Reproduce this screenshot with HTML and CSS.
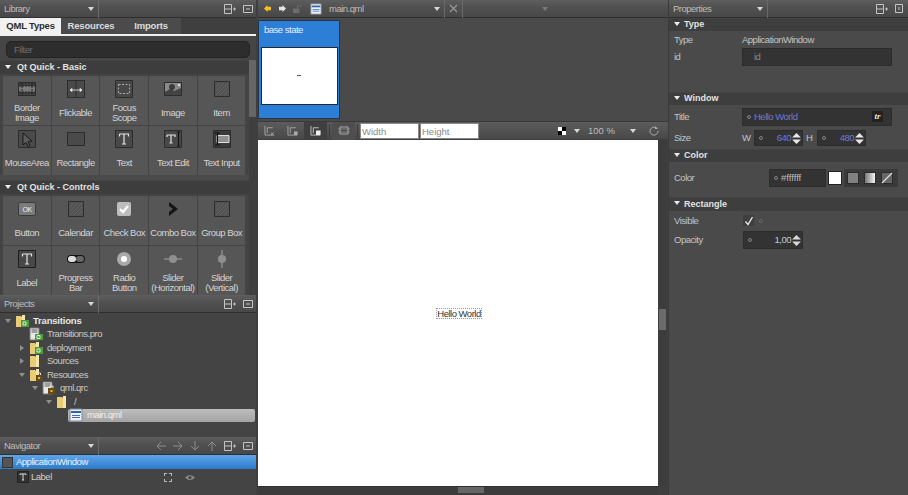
FILE: index.html
```html
<!DOCTYPE html>
<html lang="en">
<head>
<meta charset="utf-8">
<title>Qt Creator Design</title>
<link rel="stylesheet" href="styles.css">
</head>
<body>
<svg class="defs" width="0" height="0">
  <defs>
    <symbol id="split" viewBox="0 0 12 10"><path d="M.5.500h7v9h-7zM.5 5h7M9 5h3M10.500 3.500v3" fill="none" stroke="#c4c4c4"/></symbol>
    <symbol id="close" viewBox="0 0 10 8"><path d="M.5.500h9v7h-9z" fill="none" stroke="#c4c4c4"/><path d="M3 4h4" stroke="#c4c4c4"/></symbol>
    <symbol id="hatch" viewBox="-1 -1 18 18"><path d="M.5.500h15v15H.5z" fill="#525252" stroke="#2e2e2e"/><path d="M2 6l4-4M2 10l8-8M2 14L14 2M6 14l8-8M10 14l4-4" stroke="#646464"/></symbol>
    <symbol id="folder" viewBox="0 0 14 14"><path d="M1 2h5l2 2v9H1z" fill="#e9cd76"/><path d="M7 1h3v12H7z" fill="#f6e6a8"/></symbol>
    <symbol id="qtf" viewBox="0 0 14 14"><path d="M1 2h5l2 2v9H1z" fill="#e9cd76"/><path d="M7 1h3v8H7z" fill="#f6e6a8"/><path d="M6 6h8v7H6z" fill="#4f9a3c"/><path d="M8 8h3v3H8z" fill="none" stroke="#d8f0d0"/></symbol>
    <symbol id="lockf" viewBox="0 0 14 14"><path d="M1 2h5l2 2v9H1z" fill="#e9cd76"/><path d="M7 1h3v8H7z" fill="#f6e6a8"/><path d="M7 7h6v6H7z" fill="#6b4b12"/><path d="M8.500 7V5h3v2" fill="none" stroke="#ddd"/><path d="M9 9h2v2H9z" fill="#e8b93a"/></symbol>
    <symbol id="qml" viewBox="0 0 14 14"><path d="M1 1h12v12H1z" fill="#eef1f6" stroke="#7f8792"/><path d="M2 3h10v2H2z" fill="#2a66b4"/><path d="M3 7h8v1H3zM3 9h8v1H3z" fill="#3d6fb0"/></symbol>
    <symbol id="doc-green" viewBox="0 0 14 14"><path d="M1 1h9v12H1z" fill="#e8e8e8" stroke="#777"/><path d="M2.500 3h6M2.500 5h6" stroke="#555"/><path d="M6 7h8v6H6z" fill="#4f9a3c"/><path d="M8 8.500h3v3H8z" fill="none" stroke="#d8f0d0"/></symbol>
    <symbol id="doc-lock" viewBox="0 0 14 14"><path d="M1 1h9v12H1z" fill="#e8e8e8" stroke="#777"/><path d="M2.500 3h6M2.500 5h6" stroke="#555"/><path d="M6 7h7v6H6z" fill="#6b4b12"/><path d="M8 7V5h3v2" fill="none" stroke="#ddd"/><path d="M8.500 9h2v2h-2z" fill="#e8b93a"/></symbol>
  </defs>
</svg>

<div class="app">
  <aside class="left">
    <section class="library">
      <header class="bar"><span class="bar-title">Library</span><span class="caret"></span><span class="sep"></span><span class="fill"></span>
        <svg class="ico"><use href="#split"/></svg><svg class="ico-c"><use href="#close"/></svg></header>
      <div class="tabs"><span class="tab on">QML Types</span><span class="tab">Resources</span><span class="tab">Imports</span><span class="tabs-rest"></span></div>
      <div class="filter-wrap"><div class="filter">Filter</div></div>
      <div class="lib-body">
        <div class="lib-list">
          <h3 class="sec">Qt Quick - Basic</h3>
          <div class="tiles">
            <div class="tile"><svg class="ti" viewBox="0 0 18 18"><path d="M.5 2.500h17v13H.5z" fill="#3d3d3d" stroke="#2c2c2c"/><path d="M1 6h16v6H1z" fill="#7a7a7a"/><path d="M1 6h16M1 12h16M4 3v12M14 3v12" stroke="#222" stroke-dasharray="2 1"/></svg><span>Border<br>Image</span></div>
            <div class="tile"><svg class="ti" viewBox="0 0 18 18"><path d="M.5.500h17v17H.5z" fill="#4a4a4a" stroke="#2c2c2c"/><path d="M9 1v16" stroke="#2c2c2c"/><path d="M3 10h12M3 10l2-1.500v3zM15 10l-2-1.500v3z" stroke="#e8e8e8" fill="#e8e8e8" stroke-width=".8"/></svg><span>Flickable</span></div>
            <div class="tile"><svg class="ti" viewBox="0 0 18 18"><path d="M.5.500h17v17H.5z" fill="#484848" stroke="#2c2c2c"/><path d="M3.500 4.500h11v9h-11z" fill="none" stroke="#aaa" stroke-dasharray="2 1.500"/></svg><span>Focus<br>Scope</span></div>
            <div class="tile"><svg class="ti" viewBox="0 0 18 18"><path d="M.5 2.500h17v13H.5z" fill="#8a8a8a" stroke="#2c2c2c"/><path d="M1 12l5-3 4 2 7-3v7H1z" fill="#444"/><circle cx="8" cy="7" r="3" fill="#3c3c3c"/><path d="M7.500 8h1v4h-1z" fill="#333"/><path d="M14 4h2v2h-2z" fill="#ddd"/></svg><span>Image</span></div>
            <div class="tile"><svg class="ti"><use href="#hatch"/></svg><span>Item</span></div>
            <div class="tile"><svg class="ti" viewBox="0 0 18 18"><path d="M.5.500h17v17H.5z" fill="#4a4a4a" stroke="#2c2c2c"/><path d="M5 3l9 8-4 .5 2 4-2 1-2-4-3 2.500z" fill="#5c5c5c" stroke="#181818"/></svg><span>MouseArea</span></div>
            <div class="tile"><svg class="ti" viewBox="0 0 18 18"><path d="M.5 2.500h17v13H.5z" fill="#4a4a4a" stroke="#2a2a2a"/></svg><span>Rectangle</span></div>
            <div class="tile"><svg class="ti" viewBox="0 0 18 18"><path d="M.5.500h17v17H.5z" fill="#484848" stroke="#2c2c2c"/><path d="M4.500 4h9v2.500M4.500 4v2.500M9 4v10M7 14h4" fill="none" stroke="#e4e4e4" stroke-width="1.200"/></svg><span>Text</span></div>
            <div class="tile"><svg class="ti" viewBox="0 0 18 18"><path d="M.5.500h17v17H.5z" fill="#484848" stroke="#2c2c2c"/><path d="M3 5h8v2M3 5v2M7 5v8M5.500 13h3" fill="none" stroke="#e4e4e4" stroke-width="1.200"/><path d="M13 2h3M14.500 2v14M13 16h3" stroke="#111" fill="none"/></svg><span>Text Edit</span></div>
            <div class="tile"><svg class="ti" viewBox="0 0 18 18"><path d="M.5.500h17v17H.5z" fill="#3a3a3a" stroke="#2c2c2c"/><path d="M4 5.500h12v7H4z" fill="#8f8f8f" stroke="#ddd"/><path d="M2 3h5M2 15h5M4.500 3v12" stroke="#111" fill="none"/></svg><span>Text Input</span></div>
          </div>
          <h3 class="sec sec-2">Qt Quick - Controls</h3>
          <div class="tiles">
            <div class="tile"><svg class="ti" viewBox="0 0 18 18"><rect x=".5" y="2.500" width="17" height="13" rx="2" fill="#7b7b7b" stroke="#3a3a3a"/><text x="9" y="12" class="oktext" text-anchor="middle">OK</text></svg><span>Button</span></div>
            <div class="tile"><svg class="ti"><use href="#hatch"/></svg><span>Calendar</span></div>
            <div class="tile"><svg class="ti" viewBox="0 0 18 18"><rect x="2" y="2" width="14" height="14" rx="2" fill="#bdbdbd"/><path d="M5 9l3 3 5-6" fill="none" stroke="#fff" stroke-width="2.200"/></svg><span>Check Box</span></div>
            <div class="tile"><svg class="ti" viewBox="0 0 18 18"><path d="M5 2l9 7-9 7v-4l4-3-4-3z" fill="#141414"/></svg><span>Combo Box</span></div>
            <div class="tile"><svg class="ti"><use href="#hatch"/></svg><span>Group Box</span></div>
            <div class="tile"><svg class="ti" viewBox="0 0 18 18"><path d="M.5.500h17v17H.5z" fill="#484848" stroke="#1f1f1f"/><path d="M4.500 4h9v2.500M4.500 4v2.500M9 4v10M7 14h4" fill="none" stroke="#e4e4e4" stroke-width="1.200"/></svg><span>Label</span></div>
            <div class="tile"><svg class="ti" viewBox="0 0 18 18"><rect y="5" width="18" height="8" rx="4" fill="#141414"/><rect x="1" y="6" width="8" height="6" rx="3" fill="#dedede"/><rect x="9" y="6" width="8" height="6" rx="3" fill="#666"/></svg><span>Progress<br>Bar</span></div>
            <div class="tile"><svg class="ti" viewBox="0 0 18 18"><circle cx="9" cy="9" r="7" fill="#aaa"/><circle cx="9" cy="9" r="3" fill="#fff"/></svg><span>Radio<br>Button</span></div>
            <div class="tile"><svg class="ti" viewBox="0 0 18 18"><path d="M0 9h18" stroke="#8a8a8a" stroke-width="1.500"/><circle cx="9" cy="9" r="4" fill="#8f8f8f"/></svg><span>Slider<br>(Horizontal)</span></div>
            <div class="tile"><svg class="ti" viewBox="0 0 18 18"><path d="M9 0v18" stroke="#8a8a8a" stroke-width="1.500"/><circle cx="9" cy="9" r="4" fill="#8f8f8f"/></svg><span>Slider<br>(Vertical)</span></div>
          </div>
        </div>
        <div class="lib-scroll"><span class="lib-thumb"></span></div>
      </div>
    </section>

    <section class="projects">
      <header class="bar"><span class="bar-title">Projects</span><span class="caret"></span><span class="sep"></span><span class="fill"></span>
        <svg class="ico"><use href="#split"/></svg><svg class="ico-c"><use href="#close"/></svg></header>
      <ul class="tree">
        <li class="row d0 bold"><span class="arr open"></span><svg class="fi"><use href="#qtf"/></svg>Transitions</li>
        <li class="row d1"><span class="arr none"></span><svg class="fi"><use href="#doc-green"/></svg>Transitions.pro</li>
        <li class="row d1"><span class="arr shut"></span><svg class="fi"><use href="#qtf"/></svg>deployment</li>
        <li class="row d1"><span class="arr shut"></span><svg class="fi"><use href="#folder"/></svg>Sources</li>
        <li class="row d1"><span class="arr open"></span><svg class="fi"><use href="#lockf"/></svg>Resources</li>
        <li class="row d2"><span class="arr open"></span><svg class="fi"><use href="#doc-lock"/></svg>qml.qrc</li>
        <li class="row d3"><span class="arr open"></span><svg class="fi"><use href="#folder"/></svg>/</li>
        <li class="row d4 sel"><svg class="fi"><use href="#qml"/></svg>main.qml</li>
      </ul>
    </section>

    <section class="navigator">
      <header class="bar"><span class="bar-title">Navigator</span><span class="caret"></span><span class="sep"></span><span class="fill"></span>
        <svg class="nav-ar" viewBox="0 0 10 10"><path d="M10 5H1M5 1L1 5l4 4"/></svg>
        <svg class="nav-ar" viewBox="0 0 10 10"><path d="M0 5h9M5 1l4 4-4 4"/></svg>
        <svg class="nav-ar" viewBox="0 0 10 10"><path d="M5 0v9M1 5l4 4 4-4"/></svg>
        <svg class="nav-ar" viewBox="0 0 10 10"><path d="M5 10V1M1 5l4-4 4 4"/></svg>
        <svg class="ico"><use href="#split"/></svg><svg class="ico-c"><use href="#close"/></svg></header>
      <div class="nav-row active"><span class="swatch"></span>ApplicationWindow</div>
      <div class="nav-row"><svg class="nav-t" viewBox="0 0 12 12"><path d="M.5.500h11v11H.5z" fill="#333" stroke="#222"/><path d="M3 3h6M3 3v1M9 3v1M6 3v6M5 9h2" stroke="#ddd" fill="none"/></svg><span class="nav-name">Label</span>
        <span class="nav-box"></span>
        <svg class="nav-eye" viewBox="0 0 12 8"><path d="M0 4q6-6 12 0-6 6-12 0z" fill="#888"/><circle cx="6" cy="4" r="1.800" fill="#444"/></svg></div>
    </section>
  </aside>

  <main class="center">
    <header class="bar doc-bar">
      <svg class="doc-ar" viewBox="0 0 8 8"><path d="M0 4l4-4v2h4v4H4v2z" fill="#f3c221"/></svg>
      <svg class="doc-ar" viewBox="0 0 8 8"><path d="M8 4L4 0v2H0v4h4v2z" fill="#e4e4e4"/></svg>
      <svg class="doc-lock" viewBox="0 0 10 10"><path d="M0 5h7v5H0z" fill="#6d6d6d"/><path d="M5 5V2h4v2" fill="none" stroke="#6d6d6d"/></svg>
      <svg class="fi doc-fi"><use href="#qml"/></svg>
      <span class="doc-name">main.qml</span><span class="caret caret-doc"></span><span class="sep"></span>
      <svg class="doc-x" viewBox="0 0 9 9"><path d="M1 1l7 7M8 1L1 8" stroke="#9a9a9a" stroke-width="1.100"/></svg><span class="sep"></span>
      <span class="fill"></span><span class="caret caret-dim"></span>
    </header>
    <div class="states">
      <div class="state"><div class="state-name">base state</div><div class="thumb"><i class="thumb-dot"></i></div></div>
    </div>
    <div class="toolbar">
      <span class="tb-btn"><svg viewBox="0 0 12 12"><path d="M.5 1v10h10M3 9V3h6" fill="none" stroke="#a8a8a8"/><path d="M7 8l3 3M10 8l-3 3" stroke="#aaa"/></svg></span>
      <span class="tb-btn"><svg viewBox="0 0 12 12"><path d="M.5 1v10h10M3 9V3h6" fill="none" stroke="#a8a8a8"/><path d="M7 7h4v4H7z" fill="#aaa"/></svg></span>
      <span class="tb-btn pressed"><svg viewBox="0 0 12 12"><path d="M.5 1v10h10M3 9V3h6" fill="none" stroke="#c8c8c8"/><path d="M6 6h5v5H6z" fill="#eee"/></svg></span>
      <span class="tb-div"></span>
      <span class="tb-btn pressed-l"><svg viewBox="0 0 12 10"><path d="M2 1.500h8v7H2z" fill="none" stroke="#a8a8a8"/><path d="M0 3.500h12M0 6.500h12" stroke="#a8a8a8" stroke-width=".6"/></svg></span>
      <span class="tb-div"></span>
      <span class="tb-input">Width</span><span class="tb-input">Height</span>
      <span class="fill"></span>
      <svg class="checker" viewBox="0 0 8 8"><path d="M0 0h8v8H0z" fill="#000"/><path d="M0 0h4v4H0zM4 4h4v4H4z" fill="#fff"/></svg>
      <span class="caret caret-tb"></span>
      <span class="zoom">100 %</span>
      <span class="caret caret-tb2"></span>
      <svg class="reload" viewBox="0 0 10 10"><path d="M8 2.500A4 4 0 1 0 9 5" fill="none" stroke="#aaa"/><path d="M6 0v3h3z" fill="#aaa"/></svg>
    </div>
    <div class="canvas-row">
      <div class="canvas"><span class="hello">Hello World</span></div>
      <div class="vscroll"><span class="vthumb"></span></div>
    </div>
    <div class="hscroll"><span class="hthumb"></span></div>
  </main>

  <aside class="right">
    <header class="bar"><span class="bar-title">Properties</span><span class="caret caret-prop"></span><span class="sep"></span><span class="fill"></span>
      <svg class="ico"><use href="#split"/></svg><svg class="ico-d" viewBox="0 0 8 9"><path d="M.5.500h7v8h-7z" fill="none" stroke="#c4c4c4"/><path d="M4 3v3" stroke="#c4c4c4"/></svg></header>

    <h3 class="sec psec">Type</h3>
    <div class="prow p-type"><label>Type</label><span class="pval">ApplicationWindow</span></div>
    <div class="prow p-id"><label>id</label><span class="pfield id-field">id</span></div>

    <h3 class="sec psec psec-win">Window</h3>
    <div class="prow p-title"><label>Title</label><span class="pfield title-field"><i class="dot"></i>Hello World<b class="tr">tr</b></span></div>
    <div class="prow p-size"><label>Size</label><span class="wh">W</span>
      <span class="spin"><i class="dot"></i><em class="num">640</em><svg class="updown" viewBox="0 0 8 10"><path d="M4 0l4 4H0zM0 6h8l-4 4z" fill="#e8e8e8"/></svg></span>
      <span class="wh wh-h">H</span>
      <span class="spin"><i class="dot"></i><em class="num">480</em><svg class="updown" viewBox="0 0 8 10"><path d="M4 0l4 4H0zM0 6h8l-4 4z" fill="#e8e8e8"/></svg></span>
    </div>

    <h3 class="sec psec psec-color">Color</h3>
    <div class="prow p-color"><label>Color</label>
      <span class="pfield color-field"><i class="dot"></i>#ffffff</span>
      <span class="white-sw"></span>
      <span class="modes">
        <span class="mode m-solid"></span><span class="mode m-grad"></span>
        <svg class="mode-svg" viewBox="0 0 12 12"><path d="M.5.500h11v11H.5z" fill="#666" stroke="#2a2a2a"/><path d="M1 11L11 1" stroke="#ddd" stroke-width="1.200"/></svg>
      </span>
    </div>

    <h3 class="sec psec psec-rect">Rectangle</h3>
    <div class="prow p-vis"><label>Visible</label><span class="check"><svg viewBox="0 0 10 10"><path d="M1.500 5.500l2.500 3L8.500 1" fill="none" stroke="#e8e8e8" stroke-width="1.400"/></svg></span><i class="dot dot-vis"></i></div>
    <div class="prow p-op"><label>Opacity</label>
      <span class="spin spin-op"><i class="dot"></i><em class="num num-op">1,00</em><svg class="updown" viewBox="0 0 8 10"><path d="M4 0l4 4H0zM0 6h8l-4 4z" fill="#d8d8d8"/></svg></span>
    </div>
  </aside>
</div>
</body>
</html>
```

FILE: styles.css
```css
* { box-sizing: border-box; }
html, body { margin: 0; padding: 0; }
body {
  width: 908px; height: 495px; overflow: hidden;
  background: #3f3f3f; color: #c8c8c8;
  font: 9.5px/12px "Liberation Sans", Arial, sans-serif;
  letter-spacing: -.5px;
}
.defs { display: block; height: 0; }
.app { display: grid; grid-template-columns: 258px 410px 240px; height: 495px; }

/* shared header bar */
.bar {
  display: flex; align-items: center; height: 18px; flex: none;
  background: linear-gradient(#5e5e5e, #515151 40%, #484848);
  border-bottom: 1px solid #2f2f2f;
  color: #bdbdbd; padding-left: 4px;
}
.bar-title { width: 84px; }
.fill { flex: 1; }
.caret { width: 0; height: 0; border: 3px solid transparent; border-top: 4px solid #d8d8d8; border-bottom: 0; }
.sep { width: 1px; height: 18px; background: #6a6a6a; margin-left: 4px; }
.ico { width: 12px; height: 10px; margin-right: 7px; }
.ico-c { width: 10px; height: 8px; margin-right: 3px; }
.ico-d { width: 8px; height: 9px; margin-right: 5px; }

/* left column */
.left { display: flex; flex-direction: column; height: 495px; background: #444; width: 256px; }
.library { height: 295px; display: flex; flex-direction: column; overflow: hidden; background: #4a4a4a; }
.tabs { display: flex; height: 18px; flex: none; background: #3d3d3d; border-bottom: 2px solid #f0f0f0; font: bold 9.5px/16px "Liberation Sans", sans-serif; letter-spacing: -.2px; }
.tab { color: #dcdcdc; text-align: center; width: 60px; background: #4b4b4b; }
.tab.on { background: #f1f1f1; color: #2d2d2d; width: 61px; }
.tabs-rest { flex: 1; background: #3f3f3f; }
.filter-wrap { flex: none; padding: 5px 6px 2px 6px; background: #454545; height: 24px; }
.filter { height: 17px; background: #2d2d2d; border: 1px solid #222; border-radius: 5px; color: #6f6f6f; padding: 2px 7px; }
.lib-body { flex: 1; display: flex; min-height: 0; }
.lib-list { flex: 1; overflow: hidden; }
.sec {
  margin: 0; height: 14px; display: flex; align-items: center;
  padding: 0 0 1px 17px; position: relative;
  font: bold 9px/13px "Liberation Sans", sans-serif; letter-spacing: 0; color: #e2e2e2;
  background: #3d3d3d;
  border-top: 1px solid #444;
}
.sec::before {
  content: ""; position: absolute; left: 5px; top: 4px;
  border: 3px solid transparent; border-top: 4px solid #eee; border-bottom: 0;
}
.sec-2 { margin-top: 5px; }
.tiles {
  display: grid; grid-template-columns: repeat(5, 47.700px); grid-auto-rows: 49px; gap: 1px;
  padding: 2px 0 0 3px; background: #444;
}
.tile {
  background: #565656; display: flex; flex-direction: column; align-items: center;
  text-align: center; color: #d4d4d4; line-height: 10px; padding-top: 4px;
  white-space: nowrap;
}
.tile span { height: 22px; display: flex; align-items: center; justify-content: center; margin-top: 4px; }
.ti { width: 18px; height: 18px; flex: none; display: block; }
.oktext { font: 7px "Liberation Sans", sans-serif; fill: #eee; }
.lib-scroll { width: 7px; flex: none; background: #3f3f3f; }
.lib-thumb { display: block; width: 100%; height: 57px; background: #666; }

/* projects */
.projects { height: 142px; flex: none; background: #444; }
.tree { list-style: none; margin: 0; padding: 1px 0 0; }
.row { height: 13.500px; display: flex; align-items: center; color: #c9c9c9; white-space: nowrap; }
.row .fi { margin-right: 4px; }
.fi { width: 14px; height: 14px; flex: none; }
.arr { width: 10px; height: 8px; flex: none; margin-right: 2px; position: relative; }
.arr.open::before { content: ""; position: absolute; left: 2px; top: 2px; border: 3px solid transparent; border-top: 4px solid #8f8f8f; border-bottom: 0; }
.arr.shut::before { content: ""; position: absolute; left: 3px; top: 1px; border: 3px solid transparent; border-left: 4px solid #8f8f8f; border-right: 0; }
.d0 { padding-left: 3px; }
.d1 { padding-left: 17px; }
.d2 { padding-left: 30px; }
.d3 { padding-left: 44px; }
.d4 { padding-left: 69px; }
.bold { font-weight: 700; color: #e6e6e6; letter-spacing: -.2px; }
.sel { margin: 0 1px 0 68px; padding-left: 1px; background: linear-gradient(#bdbdbd, #a4a4a4); border-radius: 2px; color: #f0f0f0; }

/* navigator */
.navigator { flex: 1; background: #444; }
.nav-ar { width: 10px; height: 10px; margin-right: 7px; fill: none; stroke: #8d8d8d; stroke-width: 1; }
.nav-row { height: 14px; display: flex; align-items: center; color: #cfcfcf; }
.nav-row.active { background: linear-gradient(#5ea6ea, #2d7bcd); color: #e9f2fb; padding-left: 2px; margin-bottom: 1px; }
.swatch { width: 11px; height: 11px; background: #555; border: 1px solid #333; margin-right: 3px; }
.nav-t { width: 12px; height: 12px; margin-left: 17px; margin-right: 2px; }
.nav-name { width: 134px; }
.nav-box { width: 8px; height: 9px; border: 1px dashed #b6b6b6; margin: 0 13px 0 -1px; }
.nav-eye { width: 10px; height: 7px; }

/* center */
.center { display: flex; flex-direction: column; background: #3f3f3f; height: 495px; }
.doc-bar { padding-left: 6px; }
.doc-ar { width: 7px; height: 7px; margin-right: 8px; }
.doc-lock { width: 9px; height: 9px; margin: 0 8px 0 -1px; }
.doc-fi { margin-right: 7px; width: 12px; height: 12px; }
.doc-name { width: 106px; color: #bdbdbd; }
.caret-doc { margin-left: -1px; }
.doc-x { width: 9px; height: 9px; margin: 0 0 0 4px; }
.caret-dim { border-top-color: #7a7a7a; margin-right: 120px; }
.states { height: 103px; flex: none; background: #4a4a4a; padding: 2px 0 0 0; }
.state { width: 82px; height: 99px; background: #2c7ed6; border: 1px solid #263648; padding: 3px 2px 0 2px; }
.state-name { color: #e6eef8; padding-left: 3px; height: 23px; }
.thumb { width: 77px; height: 58px; background: #fff; border: 1px solid #1c2a38; position: relative; }
.thumb-dot { position: absolute; left: 35px; top: 27px; width: 4px; height: 1px; background: #555; }
.toolbar {
  height: 18px; flex: none; display: flex; align-items: center;
  background: linear-gradient(#5c5c5c, #484848);
  border-top: 1px solid #3a3a3a;
}
.tb-btn { width: 23px; height: 18px; display: flex; align-items: center; justify-content: center; }
.tb-btn svg { width: 12px; height: 11px; }
.pressed { background: #3f3f3f; }
.pressed-l { background: #4e4e4e; }
.tb-div { width: 1px; height: 14px; background: #3c3c3c; margin: 0 2px; }
.tb-input { width: 59px; height: 16px; background: #fff; border: 1px solid #888; color: #8a8a8a; padding: 1px 1px 0; margin-right: 1px; line-height: 13px; letter-spacing: 0; }
.checker { width: 8px; height: 8px; }
.caret-tb { margin-left: 8px; }
.zoom { margin-left: 8px; width: 42px; color: #bdbdbd; letter-spacing: 0; }
.caret-tb2 { margin-right: 13px; }
.reload { width: 10px; height: 10px; margin-right: 9px; }
.canvas-row { flex: 1; display: flex; min-height: 0; }
.canvas { width: 400px; background: #fff; display: flex; align-items: center; justify-content: center; padding: 0 0 0 2px; margin-top: 1px; }
.hello { color: #333; line-height: 9px; border: 1px dotted #999; position: relative; top: .5px; }
.vscroll { width: 7px; margin-left: 1px; background: #3c3c3c; padding-top: 170px; }
.vthumb { display: block; height: 21px; background: #6b6b6b; }
.hscroll { height: 9px; flex: none; background: #3c3c3c; border-top: 1px solid #2f2f2f; margin-right: 10px; padding-left: 200px; }
.hthumb { display: block; width: 26px; height: 6px; background: #666; }

/* right */
.right { background: #4a4a4a; border-left: 1px solid #3a3a3a; height: 495px; display: flex; flex-direction: column; }
.psec { height: 13px; flex: none; background: #3e3e3e; padding-left: 15px; }
.psec::before { top: 3px; }
.prow { display: flex; align-items: center; padding-left: 5px; color: #c4c4c4; flex: none; }
.prow label { width: 68px; flex: none; }
.p-type { height: 16px; margin-top: 1px; }
.p-id { height: 18px; }
.pfield { background: #333; border: 1px solid #2c2c2c; height: 18px; display: flex; align-items: center; color: #888; position: relative; }
.id-field { width: 150px; padding-left: 11px; }
.psec-win { margin-top: 26px; }
.p-title { height: 18px; margin-top: 3px; }
.title-field { width: 150px; color: #6e78d8; padding-left: 4px; }
.dot { width: 4px; height: 4px; border-radius: 50%; border: 1px solid #868686; flex: none; margin-right: 3px; }
.tr { position: absolute; right: 8px; top: 2px; width: 11px; height: 11px; font: italic bold 9px/10px "Liberation Serif", serif; letter-spacing: 0; color: #e8e8e8; text-align: center; background: #222; }
.p-size { height: 16px; margin-top: 4px; }
.wh { width: 12px; color: #c4c4c4; flex: none; }
.wh-h { margin-left: 3px; width: 11px; }
.spin { width: 49px; height: 16px; background: #333; display: flex; align-items: center; padding-left: 4px; position: relative; border: 1px solid #2c2c2c; }
.num { font-style: normal; color: #6e78d8; margin-left: auto; margin-right: 1px; }
.updown { width: 9px; height: 11px; margin-right: 1px; flex: none; }
.psec-color { margin-top: 3px; }
.p-color { height: 20px; margin-top: 6px; }
.p-color label { width: 95px; }
.color-field { width: 57px; height: 18px; padding-left: 4px; color: #bdbdbd; margin-right: 2px; letter-spacing: 0; }
.white-sw { width: 14px; height: 14px; background: #fff; border: 1px solid #222; margin-right: 2px; }
.modes { display: flex; align-items: center; gap: 5px; padding: 1px 3px; background: #3a3a3a; height: 18px; width: 54px; }
.mode { width: 12px; height: 12px; border: 1px solid #2a2a2a; }
.m-solid { background: #808080; }
.m-grad { background: linear-gradient(90deg, #777, #f4f4f4); }
.mode-svg { width: 12px; height: 12px; }
.psec-rect { margin-top: 9px; height: 14px; }
.p-vis { height: 15px; margin-top: 2px; }
.check { width: 11px; height: 11px; background: #3e3e3e; display: flex; align-items: center; justify-content: center; margin-right: 5px; margin-left: 1px; }
.check svg { width: 10px; height: 10px; }
.dot-vis { border-color: #666; }
.p-op { height: 18px; margin-top: 3px; }
.spin-op { width: 60px; height: 18px; margin-left: 1px; }
.num-op { color: #c8c8c8; }
```
